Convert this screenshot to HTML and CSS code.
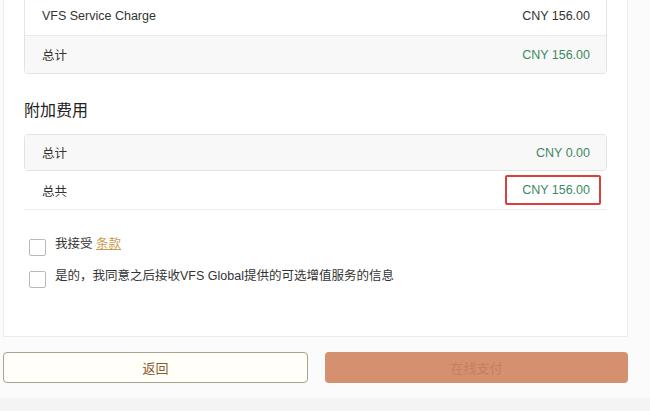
FILE: index.html
```html
<!DOCTYPE html>
<html lang="zh-CN">
<head>
  <meta charset="UTF-8">
  <title>付款摘要</title>
  <link rel="stylesheet" href="styles.css">
</head>
<body>

  <div class="page">
    <!-- 费用明细 -->
    <div class="panel">
      <div class="fee-card">
        <div class="fee-row">
          <span>VFS Service Charge</span>
          <span>CNY 156.00</span>
        </div>
        <div class="fee-row subtotal">
          <span>总计</span>
          <span class="amount">CNY 156.00</span>
        </div>
      </div>

      <h2>附加费用</h2>
      <div class="fee-card">
        <div class="fee-row subtotal single">
          <span>总计</span>
          <span class="amount">CNY 0.00</span>
        </div>
      </div>

      <div class="grand-total">
        <span>总共</span>
        <span class="amount highlight">CNY 156.00</span>
      </div>

      <!-- 条款 -->
      <label class="check-row">
        <span class="box"></span>
        <span>我接受 <a href="#" class="terms">条款</a></span>
      </label>
      <label class="check-row">
        <span class="box"></span>
        <span>是的，我同意之后接收VFS Global提供的可选增值服务的信息</span>
      </label>
    </div>

    <div class="actions">
      <button class="btn-back">返回</button>
      <button class="btn-pay" disabled>在线支付</button>
    </div>
  </div>

  <div class="footer"></div>

</body>
</html>
```

FILE: styles.css
```css
body {
  margin: 0;
  background-color: #fbfbfb;
  font-family: "Liberation Sans", "Noto Sans CJK SC", sans-serif;
  font-size: 12.5px;
  color: #333;
}

.page {
  margin-top: -25px;
  width: 625px;
  margin-left: 3px;
}

.panel {
  background: #fff;
  border: 1px solid #ececec;
  border-top: none;
  padding: 21px 20px 48px;
}

.fee-card {
  border: 1px solid #e3e3e3;
  border-radius: 4px;
  overflow: hidden;
}

.fee-row {
  display: flex;
  justify-content: space-between;
  align-items: center;
  height: 38px;
  padding: 0 16px 0 17px;
  border-bottom: 1px solid #ececec;
}

.fee-row.subtotal {
  background-color: #f8f8f8;
  border-bottom: none;
  height: 37px;
}

.fee-row.single {
  height: 35px;
}

.amount {
  color: #3d8a5f;
}

h2 {
  font-size: 16px;
  font-weight: normal;
  color: #222;
  line-height: 22px;
  margin: 26px 0 12px;
}

.grand-total {
  display: flex;
  justify-content: space-between;
  align-items: center;
  height: 38px;
  padding: 0 6px 0 18px;
  border-bottom: 1px solid #ececec;
}

.highlight {
  border: 2px solid #d9403c;
  border-radius: 2px;
  padding: 5px 9px 5px 15px;
  line-height: 16px;
}

.check-row {
  display: flex;
  align-items: flex-start;
  gap: 9px;
  padding-left: 5px;
  margin-top: 25px;
  line-height: 18px;
}

.check-row + .check-row {
  margin-top: 11px;
}

.box {
  width: 15px;
  height: 15px;
  margin-top: 4px;
  border: 1px solid #b9b9b9;
  border-radius: 2px;
  background: #fff;
  flex-shrink: 0;
}

.terms {
  color: #c79a4e;
}

.actions {
  display: flex;
  gap: 17px;
  margin-top: 15px;
}

.actions button {
  flex: 1;
  height: 31px;
  font-family: inherit;
  font-size: 13px;
  border-radius: 4px;
  cursor: pointer;
}

.btn-back {
  background: #fffef8;
  border: 1px solid #a8a48c;
  color: #8a5a2e;
}

.btn-pay {
  background: #d5906f;
  border: none;
  color: #c47f64;
}

.footer {
  margin-top: 15px;
  height: 20px;
  background: #f4f4f4;
}
```
